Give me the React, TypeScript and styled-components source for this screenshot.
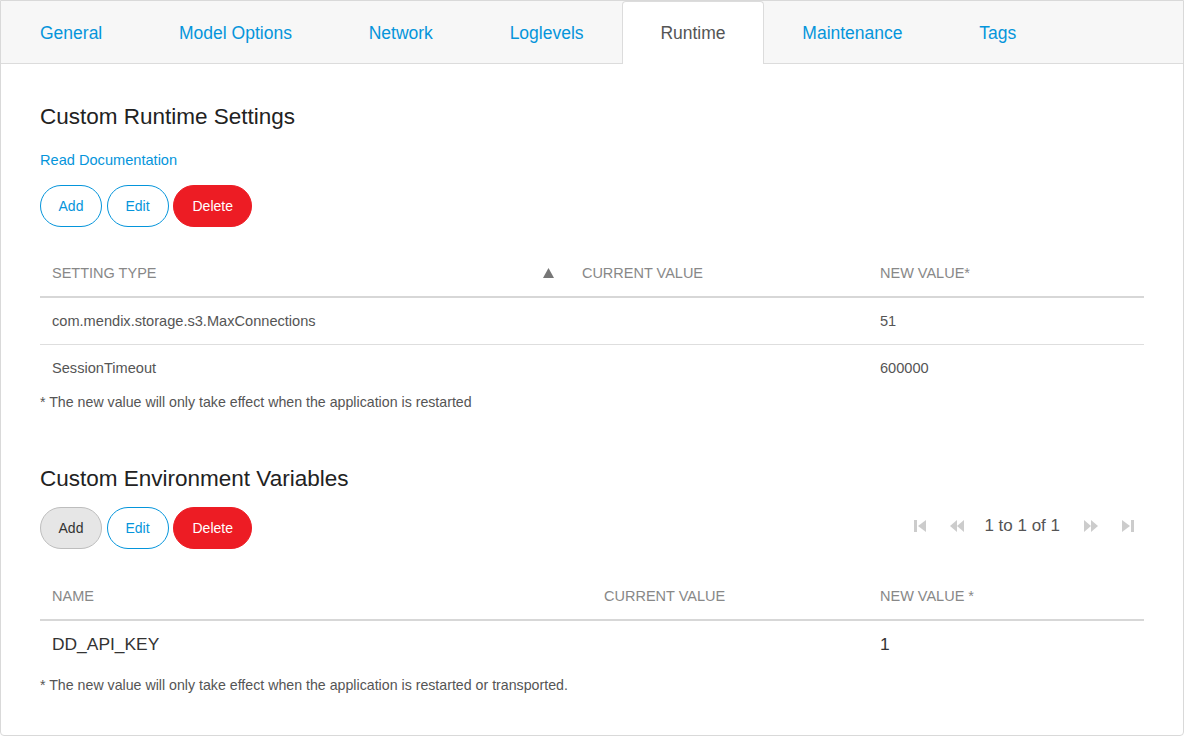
import React from "react";
import styled, { createGlobalStyle } from "styled-components";

const Global = createGlobalStyle`
  html, body { margin: 0; padding: 0; background: #fff; }
  body { font-family: "Liberation Sans", Arial, sans-serif; }
  * { box-sizing: border-box; }
`;

const Frame = styled.div`
  width: 1184px;
  height: 736px;
  border: 1px solid #d9d9d9;
  border-radius: 0 0 4px 4px;
  background: #fff;
  overflow: hidden;
`;

const TabBar = styled.div`
  display: flex;
  align-items: flex-start;
  height: 63px;
  background: #f7f7f7;
  border-bottom: 1px solid #dcdcdc;
`;

const Tab = styled.div<{ $active?: boolean }>`
  height: 63px;
  display: flex;
  align-items: center;
  padding: 0 37.4px;
  font-size: 17.5px;
  color: ${(p) => (p.$active ? "#555" : "#0595db")};
  background: ${(p) => (p.$active ? "#fff" : "transparent")};
  border: 1px solid ${(p) => (p.$active ? "#dcdcdc" : "transparent")};
  border-bottom: none;
  border-radius: 4px 4px 0 0;
  cursor: pointer;
  white-space: nowrap;
  &:first-child {
    padding-left: 38px;
  }
`;

const Panel = styled.div`
  padding: 0 39px;
`;

const Heading = styled.h2<{ $top: number }>`
  margin: ${(p) => p.$top}px 0 0;
  font-size: 22.5px;
  line-height: 24px;
  font-weight: normal;
  color: #222;
  padding-top: 1px;
`;

const DocLink = styled.a`
  display: block;
  margin-top: 21px;
  font-size: 14.6px;
  line-height: 20px;
  color: #0595db;
  text-decoration: none;
`;

const ButtonRow = styled.div<{ $top: number }>`
  display: flex;
  align-items: center;
  gap: 4.5px;
  margin-top: ${(p) => p.$top}px;
`;

const PillButton = styled.button<{ $variant: "outline" | "danger" | "pressed" }>`
  height: 42px;
  min-width: 62px;
  padding: 0 ${(p) => (p.$variant === "danger" ? "18.5px" : "17.5px")};
  border-radius: 21px;
  font-family: "Liberation Sans", Arial, sans-serif;
  font-size: 14px;
  cursor: pointer;
  border: 1px solid
    ${(p) => (p.$variant === "danger" ? "#ed1c24" : p.$variant === "pressed" ? "#bdbdbd" : "#0595db")};
  background: ${(p) => (p.$variant === "danger" ? "#ed1c24" : p.$variant === "pressed" ? "#e6e6e6" : "#fff")};
  color: ${(p) => (p.$variant === "danger" ? "#fff" : p.$variant === "pressed" ? "#333" : "#0595db")};
`;

const Pager = styled.div`
  margin-left: auto;
  display: flex;
  align-items: center;
  padding-right: 10px;
  margin-top: -4px;
`;

const PagerIcon = styled.span<{ $gap: number }>`
  display: inline-flex;
  margin-left: ${(p) => p.$gap}px;
  color: #cccccc;
`;

const PagerText = styled.span`
  margin-left: 20px;
  font-size: 17px;
  color: #555;
`;

const Table = styled.table<{ $top: number }>`
  width: 100%;
  margin-top: ${(p) => p.$top}px;
  border-collapse: collapse;
  table-layout: fixed;
`;

const Th = styled.th<{ $w: string }>`
  width: ${(p) => p.$w};
  height: 48px;
  padding: 0 12px;
  text-align: left;
  font-weight: normal;
  font-size: 14.5px;
  color: #888;
  text-transform: uppercase;
  border-bottom: 2px solid #d7d7d7;
`;

const SortArrow = styled.svg`
  float: right;
  margin: 3px 4px 0 0;
  color: #777;
`;

const Tr = styled.tr<{ $divider?: boolean }>`
  border-bottom: ${(p) => (p.$divider ? "1px solid #dedede" : "none")};
`;

const Td = styled.td<{ $big?: boolean }>`
  height: ${(p) => (p.$big ? "48px" : "47px")};
  padding: 0 12px;
  font-size: ${(p) => (p.$big ? "17.4px" : "14.6px")};
  color: ${(p) => (p.$big ? "#333" : "#555")};
`;

const Note = styled.p<{ $top: number }>`
  margin: ${(p) => p.$top}px 0 0;
  font-size: 14.2px;
  line-height: 16px;
  color: #555;
`;

const FirstIcon = () => (
  <svg width="12" height="14" viewBox="0 0 12 14">
    <rect x="0" y="1" width="3" height="12" fill="currentColor" />
    <polygon points="12,1 4,7 12,13" fill="currentColor" />
  </svg>
);
const LastIcon = () => (
  <svg width="12" height="14" viewBox="0 0 12 14">
    <polygon points="0,1 8,7 0,13" fill="currentColor" />
    <rect x="9" y="1" width="3" height="12" fill="currentColor" />
  </svg>
);
const PrevIcon = () => (
  <svg width="14" height="14" viewBox="0 0 14 14">
    <polygon points="7,1 0,7 7,13" fill="currentColor" />
    <polygon points="14,1 7,7 14,13" fill="currentColor" />
  </svg>
);
const NextIcon = () => (
  <svg width="14" height="14" viewBox="0 0 14 14">
    <polygon points="0,1 7,7 0,13" fill="currentColor" />
    <polygon points="7,1 14,7 7,13" fill="currentColor" />
  </svg>
);

const tabs = ["General", "Model Options", "Network", "Loglevels", "Runtime", "Maintenance", "Tags"];

export default function App() {
  return (
    <>
      <Global />
      <Frame>
        <TabBar>
          {tabs.map((t) => (
            <Tab key={t} $active={t === "Runtime"}>
              {t}
            </Tab>
          ))}
        </TabBar>
        <Panel>
          <Heading $top={40}>Custom Runtime Settings</Heading>
          <DocLink href="#">Read Documentation</DocLink>
          <ButtonRow $top={15}>
            <PillButton $variant="outline">Add</PillButton>
            <PillButton $variant="outline">Edit</PillButton>
            <PillButton $variant="danger">Delete</PillButton>
          </ButtonRow>
          <Table $top={22}>
            <thead>
              <tr>
                <Th $w="48%">
                  Setting Type
                  <SortArrow width="11" height="10" viewBox="0 0 11 10">
                    <polygon points="5.5,0 11,10 0,10" fill="currentColor" />
                  </SortArrow>
                </Th>
                <Th $w="27%">Current Value</Th>
                <Th $w="25%">New Value*</Th>
              </tr>
            </thead>
            <tbody>
              <Tr $divider>
                <Td>com.mendix.storage.s3.MaxConnections</Td>
                <Td></Td>
                <Td>51</Td>
              </Tr>
              <Tr>
                <Td>SessionTimeout</Td>
                <Td></Td>
                <Td>600000</Td>
              </Tr>
            </tbody>
          </Table>
          <Note $top={3}>* The new value will only take effect when the application is restarted</Note>

          <Heading $top={56}>Custom Environment Variables</Heading>
          <ButtonRow $top={16}>
            <PillButton $variant="pressed">Add</PillButton>
            <PillButton $variant="outline">Edit</PillButton>
            <PillButton $variant="danger">Delete</PillButton>
            <Pager>
              <PagerIcon $gap={0}>
                <FirstIcon />
              </PagerIcon>
              <PagerIcon $gap={24}>
                <PrevIcon />
              </PagerIcon>
              <PagerText>1 to 1 of 1</PagerText>
              <PagerIcon $gap={24}>
                <NextIcon />
              </PagerIcon>
              <PagerIcon $gap={24}>
                <LastIcon />
              </PagerIcon>
            </Pager>
          </ButtonRow>
          <Table $top={23}>
            <thead>
              <tr>
                <Th $w="50%">Name</Th>
                <Th $w="25%">Current Value</Th>
                <Th $w="25%">New Value *</Th>
              </tr>
            </thead>
            <tbody>
              <Tr>
                <Td $big>DD_API_KEY</Td>
                <Td $big></Td>
                <Td $big>1</Td>
              </Tr>
            </tbody>
          </Table>
          <Note $top={9}>* The new value will only take effect when the application is restarted or transported.</Note>
        </Panel>
      </Frame>
    </>
  );
}
